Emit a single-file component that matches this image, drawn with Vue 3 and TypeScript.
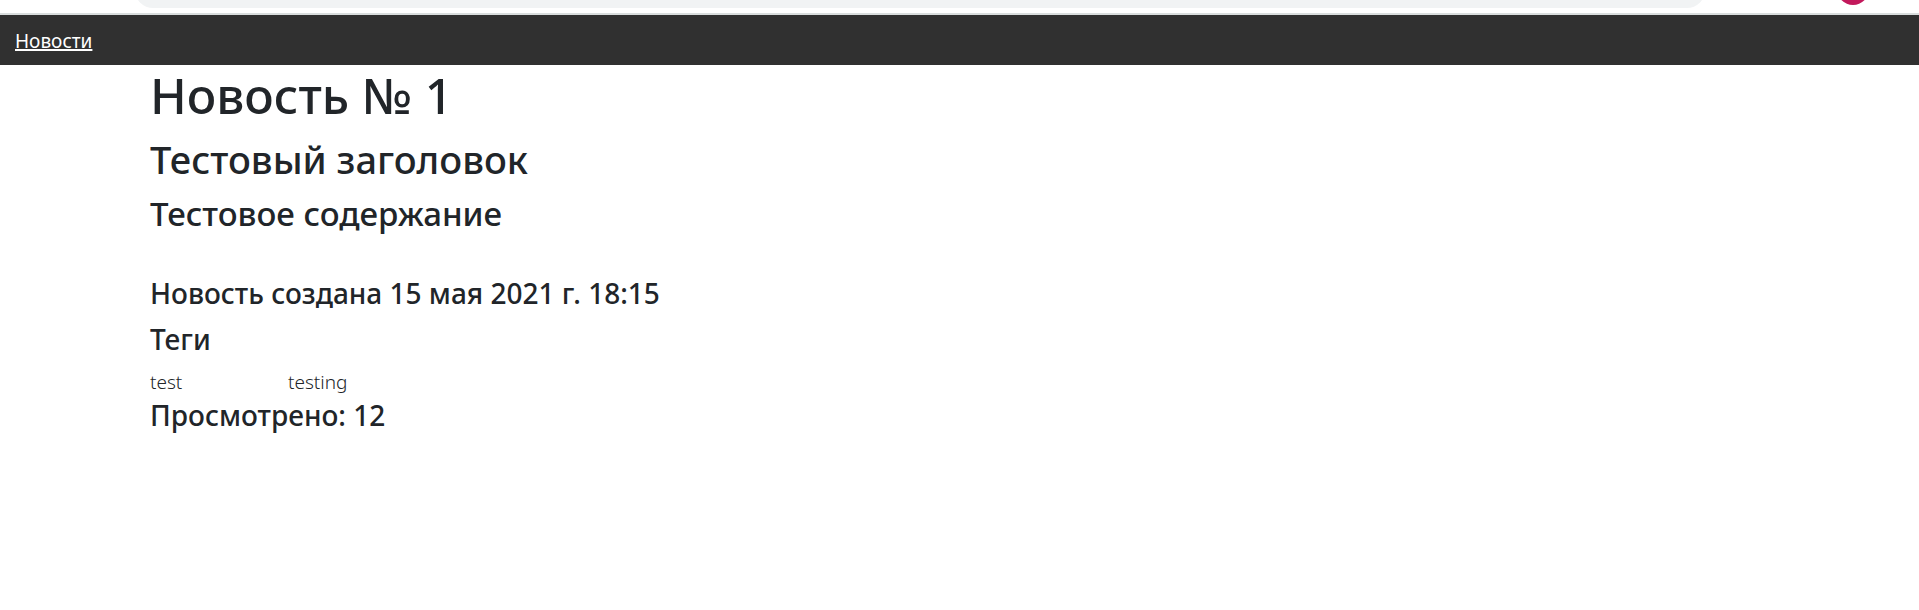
<script setup lang="ts">
interface Article {
  id: number
  title: string
  content: string
  created: string
  tags: string[]
  views: number
}

const article: Article = {
  id: 1,
  title: 'Тестовый заголовок',
  content: 'Тестовое содержание',
  created: '15 мая 2021 г. 18:15',
  tags: ['test', 'testing'],
  views: 12,
}
</script>

<template>
  <div class="page">
    <div class="toolbar">
      <div class="address"></div>
      <span class="avatar"></span>
    </div>
    <nav class="navbar"><a href="#">Новости</a></nav>
    <main class="container">
      <h1>Новость № {{ article.id }}</h1>
      <h2>{{ article.title }}</h2>
      <h3>{{ article.content }}</h3>
      <h4 class="created">Новость создана {{ article.created }}</h4>
      <h4>Теги</h4>
      <div class="tags">
        <span v-for="tag in article.tags" :key="tag">{{ tag }}</span>
      </div>
      <h4>Просмотрено: {{ article.views }}</h4>
    </main>
  </div>
</template>

<style>
body {
  margin: 0;
  background: #fff;
}
</style>

<style scoped>
.page {
  font-family: "Segoe UI", "Noto Sans", "Open Sans", sans-serif;
  font-size: 19px;
  line-height: 30px;
  color: #212529;
}
.toolbar {
  display: flex;
  align-items: flex-end;
  box-sizing: border-box;
  height: 15px;
  padding: 0 50px 5px 135px;
  border-bottom: 2px solid #d9dddd;
  overflow: hidden;
}
.address {
  flex: 1;
  height: 36px;
  border-radius: 18px;
  background: #f1f3f4;
}
.avatar {
  flex: none;
  width: 32px;
  height: 32px;
  margin: 0 0 3px 132px;
  border-radius: 50%;
  background: #c2185b;
}
.navbar {
  padding: 11px 15px 9px;
  background: #303030;
}
.navbar a {
  color: #fff;
  text-decoration-thickness: 2px;
}
.container {
  padding: 0 150px;
}
h1,
h2,
h3,
h4 {
  margin: 0 0 10px;
  font-weight: 550;
}
h1 {
  font-size: 49px;
  line-height: 60px;
}
h2 {
  font-size: 38px;
  line-height: 48px;
}
h3 {
  font-size: 33px;
  line-height: 42px;
}
h4 {
  font-size: 28px;
  line-height: 36px;
}
.created {
  margin-top: 40px;
}
.tags {
  display: grid;
  grid-template-columns: 138px 1fr;
  font-weight: 300;
}
</style>
